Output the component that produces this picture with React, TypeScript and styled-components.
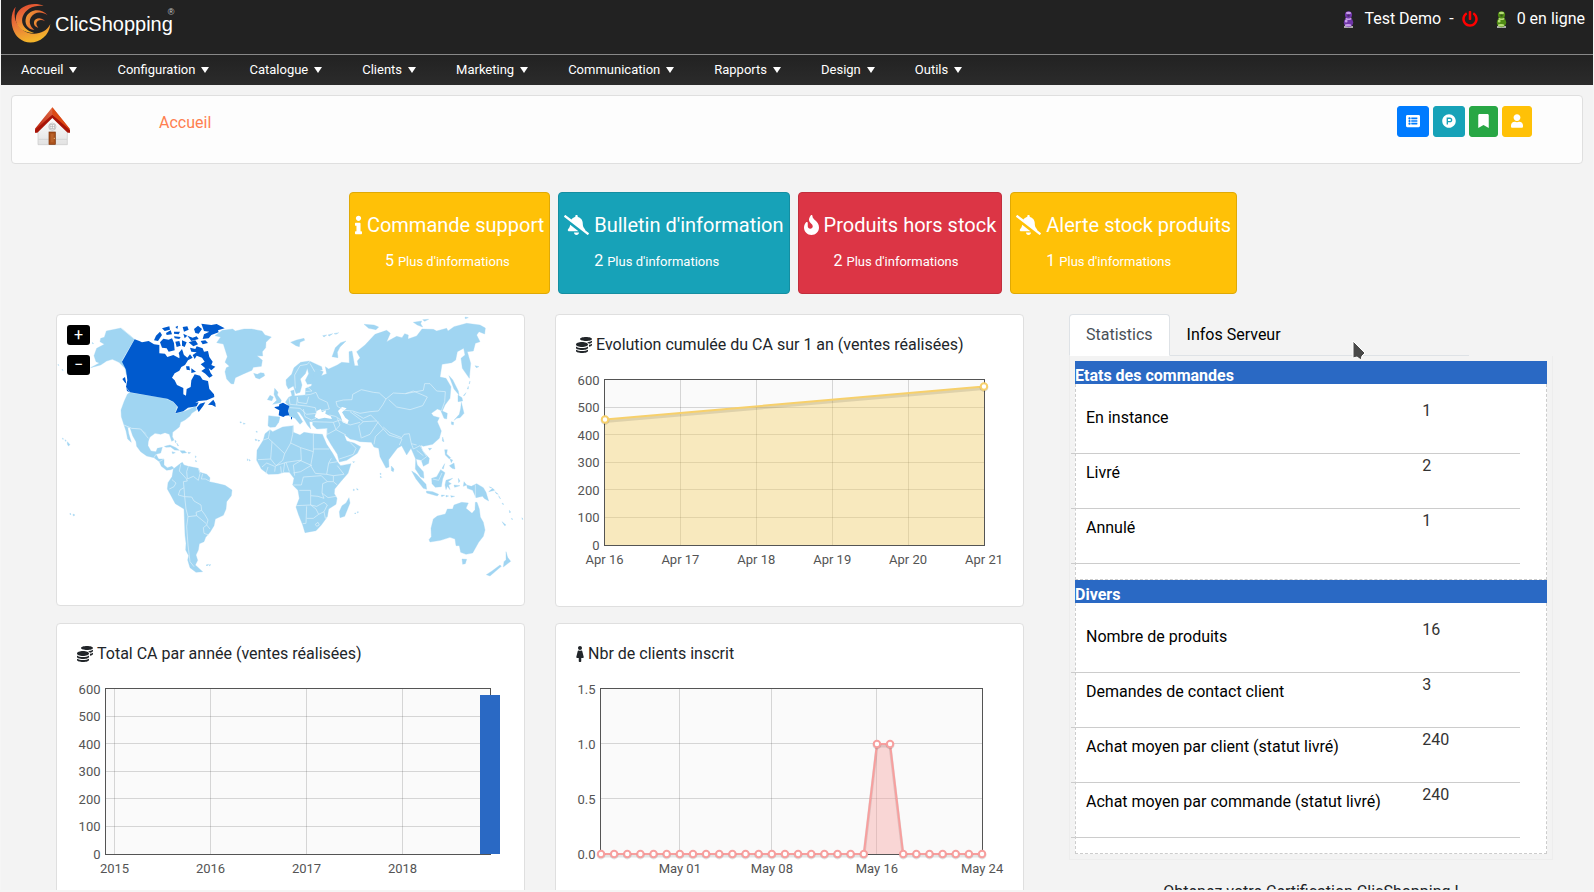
import React from 'react';
import styled, { createGlobalStyle } from 'styled-components';
import {
  FaBellSlash,
  FaBookmark,
  FaCoins,
  FaFemale,
  FaFire,
  FaInfo,
  FaListAlt,
  FaPowerOff,
  FaProductHunt,
  FaUser,
} from 'react-icons/fa';

const GlobalStyle = createGlobalStyle`
  *, *::before, *::after { box-sizing: border-box; }
  body {
    margin: 0;
    background: #f3f3f3;
    color: #212529;
    font-family: Roboto, "Liberation Sans", sans-serif;
    font-size: 16px;
    line-height: 24px;
  }
  button { font: inherit; cursor: pointer; }
`;

/* ---------- page frame and header ---------- */

const Window = styled.div`
  height: 100vh;
  padding: 0 1px 2px;
  background: #f5f5f5;
  overflow: hidden;
`;

const Page = styled.div`
  height: 100%;
  background: #f3f3f3;
  overflow: hidden;
`;

const TopBar = styled.header`
  display: flex;
  justify-content: space-between;
  align-items: flex-start;
  height: 54px;
  padding: 0 8px 0 10px;
  background: #222;
  color: #fff;
`;

const Brand = styled.a`
  display: flex;
  align-items: flex-start;
  padding-top: 4px;
  color: #fff;
  text-decoration: none;
`;

const BrandName = styled.span`
  margin: 12px 0 0 4px;
  font: 20px/16px "Liberation Sans", Arial, sans-serif;
`;

const Registered = styled.sup`
  margin: 3px 0 0 -5px;
  font: 9px/10px "Liberation Sans", Arial, sans-serif;
  color: #ccc;
`;

const UserArea = styled.div`
  display: flex;
  align-items: center;
  height: 38px;
`;

const UserName = styled.span`
  margin: 0 8px 0 10px;
`;

const LogoutLink = styled.a`
  display: flex;
  margin: 0 18px 0 8px;
  color: #f00;
`;

const Online = styled.span`
  margin-left: 10px;
`;

const MainNav = styled.nav`
  display: flex;
  height: 31px;
  border-top: 1px solid #888;
  background: linear-gradient(#222, #2b2b2b);
`;

const NavLink = styled.a`
  display: flex;
  align-items: center;
  padding: 0 20px;
  color: #fff;
  font-size: 13px;
  line-height: 20px;
  text-decoration: none;

  &::after {
    content: "";
    margin-left: 6px;
    border: 4px solid transparent;
    border-top: 6px solid #fff;
    border-bottom: 0;
  }
`;

/* ---------- title bar ---------- */

const TitleBar = styled.section`
  display: flex;
  align-items: flex-start;
  height: 69px;
  margin: 10px 10px 28px;
  padding: 10px 50px 0 22px;
  border: 1px solid #dfdfdf;
  border-radius: 4px;
  background: #fdfdfd;
`;

const PageTitle = styled.h1`
  flex: 1;
  margin: 5px 0 0 88px;
  color: #ff7f50;
  font-size: 16px;
  font-weight: 400;
`;

const ShortcutGroup = styled.div`
  display: flex;
  gap: 4px;
`;

const Shortcut = styled.button<{ $color: string }>`
  display: flex;
  align-items: center;
  height: 31px;
  padding: 0 8px 1px;
  border: 1px solid ${(p) => p.$color};
  border-radius: 3px;
  background: ${(p) => p.$color};
  color: #fff;
`;

const Glyph = styled.span<{ $w: number; $h: number }>`
  display: inline-flex;
  flex: none;

  svg {
    width: ${(p) => p.$w}px;
    height: ${(p) => p.$h}px;
  }
`;

/* ---------- alert cards ---------- */

const Alerts = styled.section`
  display: flex;
  justify-content: center;
  margin-bottom: 20px;
`;

const Alert = styled.article<{ $color: string; $edge: string }>`
  height: 102px;
  margin-right: 8px;
  padding: 20px 5px;
  border: 1px solid ${(p) => p.$edge};
  border-radius: 4px;
  background: ${(p) => p.$color};
  color: #fff;
`;

const AlertTitle = styled.h2`
  display: flex;
  align-items: center;
  gap: 5px;
  margin: 0 0 12px;
  font-size: 20px;
  font-weight: 400;
  line-height: 24px;
  white-space: nowrap;
`;

const AlertLink = styled.a`
  padding-left: 30px;
  color: #fff;
  text-decoration: none;

  small { font-size: 13px; }
`;

/* ---------- dashboard grid ---------- */

const Dashboard = styled.main`
  display: grid;
  grid-template-columns: minmax(0, 968fr) minmax(0, 484fr);
  column-gap: 45px;
  align-items: start;
  padding: 0 40px 0 55px;
`;

const Charts = styled.div`
  display: grid;
  grid-template-columns: repeat(2, minmax(0, 1fr));
  gap: 16px 30px;
  align-items: start;
`;

const Card = styled.section`
  padding: 20px;
  border: 1px solid #dfdfdf;
  border-radius: 4px;
  background: #fff;
`;

const MapCard = styled(Card)`
  position: relative;
  padding: 0;
`;

const CardTitle = styled.h3`
  display: flex;
  align-items: center;
  gap: 4px;
  margin: -2px 0 14px;
  font-size: 16px;
  font-weight: 400;
  line-height: 24px;
`;

const ChartSvg = styled.svg`
  display: block;
  width: 100%;
  height: auto;
  overflow: visible;

  text {
    fill: #545454;
    font-size: 13px;
  }
`;

const ZoomControls = styled.div`
  position: absolute;
  top: 10px;
  left: 10px;
  display: grid;
  gap: 10px;
`;

const ZoomButton = styled.button`
  width: 23px;
  height: 20px;
  padding: 0;
  border: 0;
  border-radius: 3px;
  background: #000;
  color: #fff;
  font-size: 16px;
  line-height: 18px;
`;

/* ---------- statistics column ---------- */

const TabList = styled.div`
  display: flex;
  width: calc(100% - 84px);
  border-bottom: 1px solid #dee2e6;
`;

const Tab = styled.button<{ $active?: boolean }>`
  height: 42px;
  margin-bottom: -1px;
  padding: 0 16px;
  border: 1px solid ${(p) => (p.$active ? '#dee2e6' : 'transparent')};
  border-bottom-color: ${(p) => (p.$active ? '#fff' : 'transparent')};
  border-radius: 4px 4px 0 0;
  background: ${(p) => (p.$active ? '#fff' : 'transparent')};
  color: ${(p) => (p.$active ? '#495057' : '#000')};
`;

const StatsPanel = styled.div`
  padding: 5px;
  border: 1px solid #ededed;
  border-top: 0;
`;

const StatsTitle = styled.h3`
  height: 23px;
  margin: 0;
  padding-top: 3px;
  background: #2a69c4;
  color: #fff;
  font-size: 16px;
  font-weight: 700;
  line-height: 24px;
`;

const StatsBox = styled.div`
  padding: 15px 26px 15px 0;
  border: 1px dashed #ccc;
  border-top: 0;
  background: #fff;
`;

const StatsTable = styled.table`
  width: calc(100% + 5px);
  margin-left: -5px;
  border-spacing: 0;
  table-layout: fixed;
`;

const StatLabel = styled.th`
  width: 78%;
  height: 55px;
  padding: 7px 0 0 15px;
  border-bottom: 1px solid #ccc;
  color: #000;
  font-weight: 400;
  text-align: left;
  vertical-align: top;
`;

const StatValue = styled.td`
  padding: 0 0 0 1px;
  border-bottom: 1px solid #ccc;
  color: #333;
  vertical-align: top;
`;

const Notice = styled.p`
  margin: 20px 0 0;
  text-align: center;
`;

const Pointer = styled.svg`
  position: absolute;
  top: 340px;
  left: 1352px;
`;

/* ---------- drawings ---------- */

const Swirl = () => (
  <svg width="40" height="40" viewBox="32 12 120 120" aria-hidden="true">
    <defs>
      <linearGradient id="swirl" x1="0" y1="0" x2="0.3" y2="1">
        <stop offset="0" stopColor="#e0442c" />
        <stop offset="0.5" stopColor="#e9753a" />
        <stop offset="1" stopColor="#f3b32b" />
      </linearGradient>
      <linearGradient id="swirlIn" x1="0" y1="0" x2="1" y2="0.4">
        <stop offset="0" stopColor="#f0a236" />
        <stop offset="1" stopColor="#dc4a2e" />
      </linearGradient>
    </defs>
    <path fill="url(#swirl)" d="M46 20C28 40 28 92 56 115C88 143 146 122 150 72C138 98 108 106 82 98C50 86 36 56 46 20Z" />
    <path fill="url(#swirl)" d="M130 18C100 4 58 16 48 46C40 78 66 99 102 99C74 92 60 72 67 50C76 26 102 14 130 18Z" />
    <path fill="url(#swirlIn)" d="M142 46C122 22 88 28 78 50C70 70 82 88 102 90C90 80 84 66 92 52C102 36 122 32 142 46Z" />
    <path fill="url(#swirlIn)" d="M134 64C122 50 104 54 101 66C100 76 106 82 114 83C107 76 106 68 112 63C119 58 127 59 134 64Z" />
  </svg>
);

const Pawn = ({ dark, light }: { dark: string; light: string }) => (
  <svg width="11" height="17" viewBox="0 0 11 17" aria-hidden="true">
    <path d="M1 15h9v2h-9z" fill="#aaa" />
    <circle cx="5.500" cy="11.500" r="4.700" fill={dark} />
    <ellipse cx="5.500" cy="7.500" rx="3" ry="1.500" fill={light} />
    <circle cx="5.500" cy="3.800" r="3.600" fill={dark} />
    <ellipse cx="5.500" cy="2" rx="2.600" ry="1.300" fill={light} />
    <ellipse cx="5" cy="14.200" rx="3.200" ry="1.300" fill={light} />
    <ellipse cx="3.200" cy="10" rx="1.400" ry="1.600" fill={light} />
    <circle cx="5.500" cy="4.500" r="1.200" fill="#222" opacity="0.5" />
  </svg>
);

const House = () => (
  <svg width="37" height="40" viewBox="101 318 111 120" aria-hidden="true">
    <defs>
      <linearGradient id="roof" x1="0" y1="1" x2="1" y2="0">
        <stop offset="0" stopColor="#b81d0c" />
        <stop offset="1" stopColor="#f0885a" />
      </linearGradient>
      <linearGradient id="wall" x1="0" y1="0" x2="0" y2="1">
        <stop offset="0" stopColor="#fff" />
        <stop offset="1" stopColor="#e2e2e2" />
      </linearGradient>
    </defs>
    <path d="M113 392L156 348L201 392V434H113Z" fill="url(#wall)" stroke="#c9c9c9" strokeWidth="2" />
    <path d="M114 418H145M167 418H200" stroke="#ccc" strokeWidth="2" />
    <path d="M156 322L208 386V398L156 352L106 398L104 386Z" fill="url(#roof)" />
    <path d="M156 322L208 386L204 392L156 342Z" fill="#dc4a14" />
    <path d="M104 398V390L156 344L209 390V398H202L156 354L111 398Z" fill="#a81408" />
    <circle cx="156" cy="380" r="11" fill="#ececec" stroke="#bbb" strokeWidth="2" />
    <path d="M149 374H163V386H149ZM156 374V386M149 380H163" fill="#fff" stroke="#aaa" strokeWidth="2" />
    <rect x="146" y="396" width="19" height="37" fill="#a9501a" stroke="#7d3208" strokeWidth="2" />
    <rect x="151" y="401" width="9" height="26" fill="#b9622a" />
    <circle cx="162" cy="415" r="2" fill="#e8c080" />
  </svg>
);

const WEST_LAND = [
  // Alaska and its islands
  'M152 100L163 97L169 78L213 69L254 103L216 168L232 188L235 214L229 208L225 190L207 172L187 163L170 168L152 180L122 188L148 174L138 170L132 152L140 130L163 118L150 110Z',
  'M37 399l4 3-3 1zM45 404l4 3-3 2zM52 410l8 9-5 4-3-6zM60 624l3 4-3 1zM69 627l6 3-5 3zM127 112l4 4-4 0zM36 192l4 4-4 0zM24 178l3 3-3 0z',
  // United States
  'M240 262L340 277L352 280L370 290L382 305L376 325L400 320L420 312L436 303L440 315L425 325L420 333L405 345L392 352L388 366L368 382L367 395L372 405L365 409L358 388L345 383L332 388L315 385L300 396L293 412L288 385L272 372L245 370L222 360L214 335L213 315L222 290L232 268Z',
  // Mexico and Central America
  'M222 360L245 370L272 372L288 386L295 400L294 422L303 438L318 440L322 430L337 427L332 444L318 448L326 462L342 462L342 480L352 488L366 484L372 490L362 494L350 496L334 484L328 470L312 458L290 453L272 440L260 424L258 410L248 392L240 368L233 366L236 385L244 412L233 402L228 378Z',
  // Caribbean
  'M343 424L360 420L378 428L388 436L374 435L362 426L348 427ZM390 437L403 437L410 443L396 445ZM366 440l10 3-8 3zM414 442l8 1-6 3zM375 405l4 6-3 2zM380 414l6 8-3 0zM436 452l3 4-3 2zM437 465l3 5-3 0z',
  // South America
  'M370 492L392 475L397 472L402 480L415 484L445 490L450 502L470 508L480 518L478 530L500 535L525 541L546 555L544 572L530 590L528 612L520 631L496 642L492 662L480 682L467 697L462 710L448 716L445 735L438 750L443 766L436 780L458 800L438 802L420 788L413 765L416 752L407 735L408 715L405 690L402 612L376 596L362 570L352 552L354 533L366 515Z',
  'M468 780l8-2-5 5zM478 779l5 0-6 4z',
  // Greenland and Iceland
  'M495 92L517 76L548 72L556 78L582 72L605 72L636 78L645 90L664 96L648 112L647 128L637 140L638 153L621 152L637 166L634 184L610 187L606 196L582 206L556 218L551 237L543 236L530 222L525 200L529 188L538 184L525 172L532 155L520 117L500 113L512 96Z',
  'M611 205L622 208L632 203L642 205L644 212L628 222L617 218Z',
  // British Isles
  'M674 250L684 262L682 270L694 286L692 293L668 298L680 286L672 268ZM652 284L660 271L670 276L666 287Z',
  'M570 350l5 2-4 2zM580 354l6 2-5 2zM618 378l5 3-4 1zM615 402l7 3-5 2zM624 405l6 2-5 2zM592 461l3 4-3 2zM598 463l3 4-3 1z',
];

const EAST_LAND = [
  // Scandinavia
  'M108 224L125 208L132 188L152 172L178 168L215 185L217 195L194 194L195 220L189 236L172 238L166 226L176 206L172 190L166 206L151 222L156 240L150 262L138 266L130 243L115 252L109 240Z',
  // Eurasia
  'M106 292L116 277L126 272L122 258L132 255L134 273L166 270L167 250L184 243L190 215L193 194L205 193L220 200L214 212L230 206L226 185L236 192L262 180L275 172L298 174L297 140L306 138L314 182L325 182L322 168L330 158L320 140L345 120L375 88L410 76L421 85L410 110L440 94L456 98L464 86L475 90L474 102L500 93L516 72L550 73L560 78L590 70L594 78L612 65L650 55L690 60L706 69L704 87L687 80L680 90L690 110L676 115L670 138L652 140L662 175L658 220L637 190L633 160L645 150L641 130L622 140L617 165L605 173L576 178L570 216L588 220L603 245L600 280L585 300L577 318L592 325L590 342L582 340L572 316L562 312L544 325L550 333L568 338L562 350L574 378L568 400L548 418L520 424L512 420L518 438L538 460L536 475L520 484L514 466L498 462L502 480L520 500L522 520L512 516L496 492L497 462L483 430L470 450L455 422L442 430L416 464L417 486L408 489L390 455L386 430L372 426L364 412L330 410L318 406L300 402L282 388L290 408L312 414L332 425L322 445L290 466L268 471L262 448L244 420L230 396L232 370L200 372L188 360L188 350L178 350L182 372L172 360L158 336L148 322L140 320L158 350L150 358L135 340L117 333L115 318L117 303Z',
  // Iberia
  'M56 332L90 336L86 352L76 366L60 367L54 362Z',
  // Africa
  'M60 374L68 380L98 366L130 362L130 382L150 390L162 382L190 386L217 388L230 418L248 445L262 470L272 482L303 476L294 505L272 530L254 552L253 566L261 580L258 598L236 612L232 635L214 660L198 677L165 683L158 660L146 630L138 606L148 580L144 556L128 540L132 520L118 502L102 502L84 507L55 508L34 492L20 466L21 436L40 405L45 386Z',
  'M297 578L300 594L284 634L270 638L268 620L276 602L288 594Z',
  // Indian Ocean
  'M424 483L432 492L430 500L424 497ZM390 504l4 3-3 2zM391 513l4 4-4 1zM310 552l4 3-4 2zM320 550l5 4-4 1zM314 624l4 0-3 3zM322 620l4 1-4 3zM308 470l6 0-3 3z',
  // Indonesia and Philippines
  'M485 498L498 506L528 538L530 553L520 550L498 522ZM529 558L548 560L566 568L562 573L530 564ZM574 570l10 1-9 4zM588 571l8 2-8 3zM602 572l12 2-10 3zM545 520L560 515L572 494L585 503L578 522L574 545L556 547L546 536ZM588 526L608 520L594 530L604 536L596 540L600 554L592 544L588 554L585 540ZM584 434L592 434L590 447L602 458L598 462L586 450ZM598 482L612 474L615 492L606 490ZM600 462l8 3-4 8zM576 490l8-14-4 16zM612 540l18 2-16 5zM625 520l5 8-4 5z',
  // New Guinea and Pacific islands
  'M650 540L664 544L680 536L700 548L708 562L716 588L702 580L698 574L678 578L668 556L652 550ZM642 530l8 10-10 4zM716 560L728 550L734 556ZM718 545l8 4-6-1zM735 560l10 8-6-2zM746 572l6 10-4-4zM756 594l6 4-4 0zM778 616l4 5-3 3zM784 640l5 3-4 0zM756 650l12 10-4 2zM816 638l3 5-3 0z',
  // Australia, Tasmania, New Zealand
  'M550 642L562 633L586 627L592 612L608 612L612 600L635 592L655 594L648 610L666 625L675 614L676 592L681 592L688 612L691 636L700 652L705 675L700 694L686 712L668 744L648 748L632 742L628 722L618 722L615 702L600 697L572 706L540 711L537 704L544 695L543 670Z',
  'M636 762L650 763L646 776L638 778ZM768 740L773 757L782 769L760 786L762 770L768 764ZM750 780L754 784L720 813L709 809L726 798Z',
  // Japan, Sakhalin, Korea
  'M597 212L608 224L625 258L627 270L612 252ZM624 270L636 278L638 288L624 290ZM634 292L642 325L630 338L620 340L612 346L628 328L632 310ZM604 350l7 2-1 8-6-2zM578 396l4 14-5-2zM535 430l10 0-6 6zM640 272l8-9-4 8zM652 252l3-8 0 8zM657 236l3-8-1 8zM675 182l12 3-8 3z',
  // Arctic islands
  'M246 155L250 145L256 128L272 113L288 108L270 126L262 142L264 158ZM122 112L140 105L162 100L164 106L150 112L148 125L138 122ZM218 92l12-2-8 6zM234 90l14-4-10 7zM252 86l14-3-8 5zM342 58L372 60L386 66L378 74L356 70ZM490 52L515 48L512 56L518 66L502 60ZM518 44l18-1-12 6zM645 36l10 2-9 3z',
];

const BORDERS_WEST =
  'M213 69L254 103L216 168M240 262L340 277L370 290L382 305L376 325L436 303M222 360L245 370L272 372L295 400M312 458L318 448M328 470L342 462M392 478L388 498L408 520L412 528L400 530L402 548L390 555L385 570L404 575L425 576L432 588L453 600L455 616L464 628L474 645L470 660L480 672M366 524L378 534L372 545L358 552M415 484L410 500L412 522L430 514L445 526L450 505L445 490M458 506L454 522L466 522L478 528M402 548L404 575M404 575L408 612L414 635L440 632L438 622L455 616M414 635L410 665L414 720L420 770L432 785M440 632L468 655M470 660L460 668L462 685L476 690';

const BORDERS_EAST =
  'M136 250L134 210L150 182L172 178L180 168M180 175L194 200M166 270L182 268L198 262L206 280L232 292L238 312L212 318M117 277L120 298L140 300L142 276M142 276L144 292L170 296L176 275M140 300L170 303L196 308L200 325L170 328L150 310L120 308M160 312L165 335L184 345M184 345L198 340M170 244L186 258L166 260M258 290L280 285L306 284L308 268L334 254L370 262L388 264L408 282L398 300L385 318L360 320L330 325L308 318L284 316L262 304ZM408 282L430 264L466 266L490 258L532 276L518 302L480 314L440 306L416 284M466 266L520 256L524 236L540 236L560 258L586 260L584 290L574 318M300 320L340 350L326 362L334 400M340 350L380 348L362 330L340 340L310 322M385 350L360 388L336 398M380 348L400 372L376 395L372 418M400 366L420 384L455 398L462 388L478 386L484 416L500 420M400 372L416 390L456 402M456 402L448 420M484 416L490 432L510 422L530 455L512 468M500 436L520 452M262 340L270 360L258 374L288 390M228 370L232 388L258 374L250 352L188 350M250 352L270 345L300 360L330 352M238 330L256 334L272 344M268 462L310 448L318 430L300 412M118 500L108 472L150 466L186 482M130 362L128 388L122 414L104 446L66 410L55 400L60 374M55 400L40 405M66 410L62 462L24 464M104 446L98 466L76 484L74 500M62 462L78 482L108 472M122 414L152 428L154 466L130 480L134 512M152 428L190 440L190 386M190 432H238M154 466L150 466M190 440L182 482L196 505L230 508L236 474L244 460M182 482L152 500L130 504M230 508L250 512L282 508L262 482M238 474L262 470M250 512L250 530L232 530L214 512L160 516L154 540L130 540M232 530L218 536L216 564L222 580L204 574L182 572L182 556L148 556M250 530L262 540M216 564L234 578L258 574M182 572L182 600L138 602M182 600L200 604L222 592L232 600L222 620L206 628L198 612L182 600M170 604L168 655L158 656M170 640L190 640L206 628M222 620L226 640L232 635M196 658L204 652L208 660L200 664ZM36 486L50 474L74 484M48 506L54 486M92 484L94 504M104 474L100 502M676 540V578M548 522L566 526L576 504';

const CANADA = [
  'M254 103L268 108L276 112L296 108L312 118L328 120L328 145L345 146L352 156L370 150L388 160L390 142L398 140L402 150L412 158L420 148L428 158L414 166L405 180L394 186L388 197L374 205L366 218L374 226L381 240L400 249L400 268L408 272L410 252L422 246L424 226L434 208L450 212L458 224L474 228L478 252L492 268L493 276L470 286L446 288L436 294L446 292L440 304L414 308L400 319L376 325L384 306L370 290L352 281L240 262L228 246L232 226L228 194L216 170Z',
  // Maritime provinces and Newfoundland
  'M440 308L450 296L466 292L460 302L446 321ZM474 299L490 284L496 295L497 306L486 300ZM424 190L438 200L424 204Z',
  // Vancouver Island and coast
  'M217 222l8-6 4 20-5-4zM229 248l10 14-8-4z',
  // Arctic archipelago
  'M330 112L340 101L356 104L366 100L372 114L374 136L356 140L350 130L336 128ZM312 106L318 92L330 80L336 90L324 108ZM336 70L358 64L360 74L344 78ZM348 84L362 76L366 88L350 90ZM376 66l8-4-2 10zM372 80l18 0-4 8-14-2zM398 66l14-2 4 10-14 6zM400 86l12 6-8 8zM376 110l12-2 4 14-12 4zM372 94l20 2-4 6-14-2zM396 106l14 6-6 14-8-4zM412 92l16 6 12-4 6 8-22 6zM416 112L436 106L444 118L430 124ZM432 72L444 62L456 72L446 86L436 84ZM454 56L466 58L484 60L500 57L524 70L504 76L506 82L484 90L476 100L458 102L462 88L478 80L462 78ZM452 108l14-2 8 8-16 4z',
  // Baffin Island
  'M420 128L436 132L440 124L458 130L462 140L474 138L478 156L488 170L484 180L496 185L484 196L476 190L482 204L488 212L478 218L466 206L454 198L466 190L452 178L464 170L456 158L440 152L434 162L428 150L440 142L424 140ZM386 144l10-12 4 12-10 12zM408 184l10 0 2 12-10-2z',
];

const WorldMap = () => (
  <ChartSvg viewBox="21 30 1401 870" role="img" aria-label="Carte des commandes par pays">
    <g fill="#a0d5f2" stroke="#a0d5f2" strokeWidth="1">
      {WEST_LAND.map((d) => (
        <path key={d} d={d} />
      ))}
      <g transform="translate(600 0)">
        {EAST_LAND.map((d) => (
          <path key={d} d={d} />
        ))}
      </g>
    </g>
    <g transform="translate(600 0)" fill="#fff">
      {/* Black Sea and Caspian Sea */}
      <path d="M194 336L200 318L212 312L216 322L228 316L226 326L242 334L246 342L224 338L206 342Z" />
      <path d="M264 318L276 306L290 310L276 322L286 338L296 346L292 358L278 352L272 334Z" />
    </g>
    <g fill="none" stroke="#dff1fb" strokeWidth="2" strokeLinejoin="round">
      <path d={BORDERS_WEST} />
      <path d={BORDERS_EAST} transform="translate(600 0)" />
    </g>
    <g fill="#005ace">
      {CANADA.map((d) => (
        <path key={d} d={d} />
      ))}
      {/* France and Corsica */}
      <path
        transform="translate(600 0)"
        d="M74 306L87 304L88 298L99 293L110 299L118 303L114 318L118 331L106 332L100 336L86 331L88 316L74 308ZM123 336h3v7h-3z"
      />
    </g>
  </ChartSvg>
);

/* ---------- charts ---------- */

type Tick = { at: number; label: string };

const TOP = 8.5;
const BOTTOM = 174;

type FrameProps = {
  left: number;
  right: number;
  xTicks: Tick[];
  yLabels: string[];
  name: string;
  children: React.ReactNode;
};

const Plot = ({ left, right, xTicks, yLabels, name, children }: FrameProps) => {
  const step = (BOTTOM - TOP) / (yLabels.length - 1);
  return (
    <ChartSvg viewBox="0 0 427 215" role="img" aria-label={name}>
      <rect x={left} y={TOP} width={right - left} height={BOTTOM - TOP} fill="#fafafa" />
      <g stroke="#545454" strokeOpacity="0.22" shapeRendering="crispEdges">
        {xTicks.map((t) => (
          <line key={t.label} x1={t.at} x2={t.at} y1={TOP} y2={BOTTOM} />
        ))}
        {yLabels.slice(1, -1).map((l, i) => (
          <line key={l} x1={left} x2={right} y1={BOTTOM - step * (i + 1)} y2={BOTTOM - step * (i + 1)} />
        ))}
      </g>
      <rect
        x={left}
        y={TOP}
        width={right - left}
        height={BOTTOM - TOP}
        fill="none"
        stroke="#545454"
        shapeRendering="crispEdges"
      />
      {children}
      {yLabels.map((l, i) => (
        <text key={l} x={left - 5} y={BOTTOM - step * i + 5} textAnchor="end">
          {l}
        </text>
      ))}
      {xTicks.map((t) => (
        <text key={t.label} x={t.at} y={BOTTOM + 19} textAnchor="middle">
          {t.label}
        </text>
      ))}
    </ChartSvg>
  );
};

const Line = ({ points, color, fill }: { points: number[][]; color: string; fill: string }) => {
  const trace = points.map((p) => p.join(' ')).join('L');
  return (
    <>
      <path
        d={`M${trace}L${points[points.length - 1][0]} ${BOTTOM}L${points[0][0]} ${BOTTOM}Z`}
        fill={fill}
        fillOpacity="0.4"
      />
      <path d={`M${trace}`} transform="translate(0 2)" fill="none" stroke="#000" strokeOpacity="0.1" strokeWidth="3" />
      <path d={`M${trace}`} fill="none" stroke={color} strokeWidth="2" strokeLinejoin="round" />
      {points.map(([x, y]) => (
        <g key={x}>
          <circle cx={x} cy={y + 1} r="3.400" fill="none" stroke="#000" strokeOpacity="0.12" strokeWidth="2" />
          <circle cx={x} cy={y} r="3.200" fill="#fff" stroke={color} strokeWidth="2" />
        </g>
      ))}
    </>
  );
};

const HUNDREDS = ['0', '100', '200', '300', '400', '500', '600'];

const salesTicks: Tick[] = [16, 17, 18, 19, 20, 21].map((day, i) => ({
  at: 28.5 + i * 75.9,
  label: `Apr ${day}`,
}));

const yearTicks: Tick[] = [
  { at: 37.5, label: '2015' },
  { at: 133.5, label: '2016' },
  { at: 229.5, label: '2017' },
  { at: 325.5, label: '2018' },
];

const dayX = (i: number) => 25 + i * 13.14;
const clientTicks: Tick[] = [
  { at: dayX(6), label: 'May 01' },
  { at: dayX(13), label: 'May 08' },
  { at: dayX(21), label: 'May 16' },
  { at: dayX(29), label: 'May 24' },
];
const clientPoints = Array.from({ length: 30 }, (_, i) => [dayX(i), i === 21 || i === 22 ? 64 : BOTTOM]);

/* ---------- content ---------- */

const NAV = ['Accueil', 'Configuration', 'Catalogue', 'Clients', 'Marketing', 'Communication', 'Rapports', 'Design', 'Outils'];

const SHORTCUTS = [
  { name: 'Commandes', color: '#007bff', w: 14, icon: <FaListAlt /> },
  { name: 'Produits', color: '#17a2b8', w: 14, icon: <FaProductHunt /> },
  { name: 'Favoris', color: '#28a745', w: 11, icon: <FaBookmark /> },
  { name: 'Clients', color: '#ffc107', w: 12, icon: <FaUser /> },
];

const ALERTS = [
  { title: 'Commande support', count: 5, color: '#ffc107', edge: '#dfa906', w: 7, icon: <FaInfo /> },
  { title: "Bulletin d'information", count: 2, color: '#17a2b8', edge: '#148ea1', w: 25, icon: <FaBellSlash /> },
  { title: 'Produits hors stock', count: 2, color: '#dc3545', edge: '#c12e3c', w: 15, icon: <FaFire /> },
  { title: 'Alerte stock produits', count: 1, color: '#ffc107', edge: '#dfa906', w: 25, icon: <FaBellSlash /> },
];

const STATS = [
  {
    title: 'Etats des commandes',
    rows: [
      ['En instance', '1'],
      ['Livré', '2'],
      ['Annulé', '1'],
    ],
  },
  {
    title: 'Divers',
    rows: [
      ['Nombre de produits', '16'],
      ['Demandes de contact client', '3'],
      ['Achat moyen par client (statut livré)', '240'],
      ['Achat moyen par commande (statut livré)', '240'],
    ],
  },
];

export default function App() {
  return (
    <Window>
      <GlobalStyle />
      <Page>
        <TopBar>
          <Brand href="#">
            <Swirl />
            <BrandName>ClicShopping</BrandName>
            <Registered>®</Registered>
          </Brand>
          <UserArea>
            <Pawn dark="#6f35a8" light="#c79be8" />
            <UserName>Test Demo</UserName>-
            <LogoutLink href="#" aria-label="Déconnexion">
              <FaPowerOff />
            </LogoutLink>
            <Pawn dark="#4f8a14" light="#b4dc74" />
            <Online>0 en ligne</Online>
          </UserArea>
        </TopBar>
        <MainNav>
          {NAV.map((item) => (
            <NavLink key={item} href="#">
              {item}
            </NavLink>
          ))}
        </MainNav>

        <TitleBar>
          <House />
          <PageTitle>Accueil</PageTitle>
          <ShortcutGroup>
            {SHORTCUTS.map((s) => (
              <Shortcut key={s.name} $color={s.color} aria-label={s.name}>
                <Glyph $w={s.w} $h={14}>
                  {s.icon}
                </Glyph>
              </Shortcut>
            ))}
          </ShortcutGroup>
        </TitleBar>

        <Alerts>
          {ALERTS.map((a) => (
            <Alert key={a.title} $color={a.color} $edge={a.edge}>
              <AlertTitle>
                <Glyph $w={a.w} $h={20}>
                  {a.icon}
                </Glyph>
                {a.title}
              </AlertTitle>
              <AlertLink href="#">
                {a.count} <small>Plus d'informations</small>
              </AlertLink>
            </Alert>
          ))}
        </Alerts>

        <Dashboard>
          <Charts>
            <MapCard>
              <WorldMap />
              <ZoomControls>
                <ZoomButton aria-label="Agrandir">+</ZoomButton>
                <ZoomButton aria-label="Réduire">−</ZoomButton>
              </ZoomControls>
            </MapCard>
            <Card>
              <CardTitle>
                <Glyph $w={16} $h={16}>
                  <FaCoins />
                </Glyph>
                Evolution cumulée du CA sur 1 an (ventes réalisées)
              </CardTitle>
              <Plot left={28.5} right={408.5} xTicks={salesTicks} yLabels={HUNDREDS} name="Evolution cumulée du CA">
                <Line
                  points={[
                    [29, 48.5],
                    [408, 15.5],
                  ]}
                  color="#f7d06b"
                  fill="#f6d065"
                />
              </Plot>
            </Card>
            <Card>
              <CardTitle>
                <Glyph $w={16} $h={16}>
                  <FaCoins />
                </Glyph>
                Total CA par année (ventes réalisées)
              </CardTitle>
              <Plot left={28.5} right={413.5} xTicks={yearTicks} yLabels={HUNDREDS} name="Total CA par année">
                <rect x="403" y="15" width="20" height="159" fill="#2a69c4" />
              </Plot>
            </Card>
            <Card>
              <CardTitle>
                <Glyph $w={8} $h={16}>
                  <FaFemale />
                </Glyph>
                Nbr de clients inscrit
              </CardTitle>
              <Plot
                left={24.5}
                right={406.5}
                xTicks={clientTicks}
                yLabels={['0.0', '0.5', '1.0', '1.5']}
                name="Nombre de clients inscrits"
              >
                <Line points={clientPoints} color="#f79f9e" fill="#f79f9e" />
              </Plot>
            </Card>
          </Charts>

          <aside>
            <TabList role="tablist">
              <Tab role="tab" aria-selected="true" $active>
                Statistics
              </Tab>
              <Tab role="tab" aria-selected="false">
                Infos Serveur
              </Tab>
            </TabList>
            <StatsPanel role="tabpanel">
              {STATS.map((group) => (
                <section key={group.title}>
                  <StatsTitle>{group.title}</StatsTitle>
                  <StatsBox>
                    <StatsTable>
                      <tbody>
                        {group.rows.map(([label, value]) => (
                          <tr key={label}>
                            <StatLabel scope="row">{label}</StatLabel>
                            <StatValue>{value}</StatValue>
                          </tr>
                        ))}
                      </tbody>
                    </StatsTable>
                  </StatsBox>
                </section>
              ))}
            </StatsPanel>
            <Notice>Obtenez votre Certification ClicShopping !</Notice>
          </aside>
        </Dashboard>
      </Page>
      <Pointer width="15" height="21" viewBox="0 0 15 21" aria-hidden="true">
        <path d="M1 1V18L5 17L9 20L10 16L13 13Z" fill="#484848" stroke="#fff" strokeWidth="1" />
      </Pointer>
    </Window>
  );
}
